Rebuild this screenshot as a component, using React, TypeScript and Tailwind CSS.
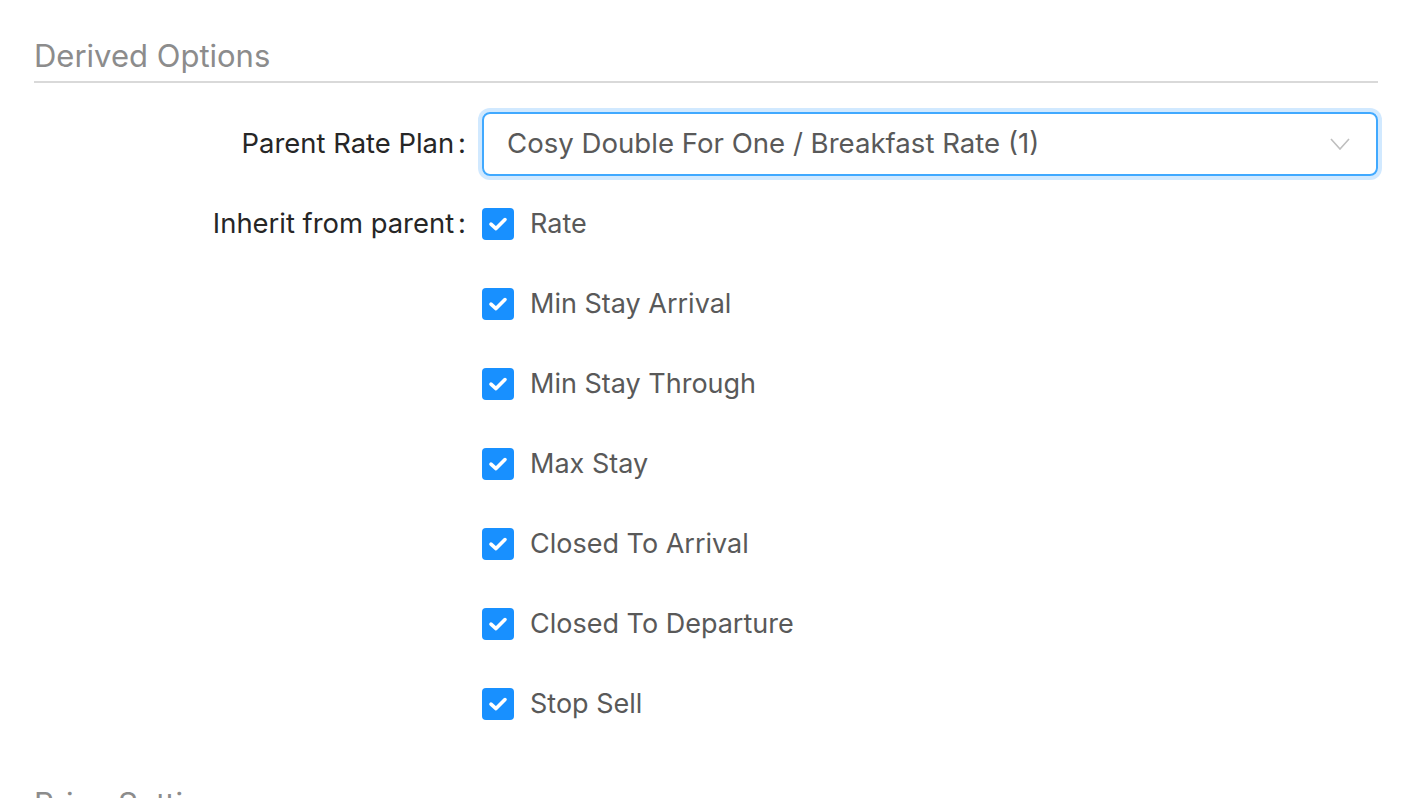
import React from 'react';

const options = [
  'Rate',
  'Min Stay Arrival',
  'Min Stay Through',
  'Max Stay',
  'Closed To Arrival',
  'Closed To Departure',
  'Stop Sell',
];

const CheckBox: React.FC = () => (
  <span className="flex h-[32px] w-[32px] shrink-0 items-center justify-center rounded-[4px] bg-[#1890ff]">
    <svg width="20" height="16" viewBox="0 0 20 16" fill="none">
      <path d="M3 8.2 L8 12.6 L17 3.6" stroke="white" strokeWidth="3.6" strokeLinecap="round" strokeLinejoin="round" />
    </svg>
  </span>
);

const FormLabel: React.FC<{ text: string }> = ({ text }) => (
  <div className="flex w-[448px] shrink-0 items-center justify-end text-[27.4px] text-[#262626]">
    <span>{text}</span>
    <span className="ml-[4px] mr-[16px]">:</span>
  </div>
);

const App: React.FC = () => {
  return (
    <div className="min-h-screen overflow-hidden bg-white pl-[34px] pr-[24px] pt-[33px] font-['Inter',sans-serif]">
      {/* Derived Options */}
      <h2 className="border-b-2 border-[#d9d9d9] pb-[2px] text-[31px] font-normal leading-[46px] text-[#8c8c8c]">
        Derived Options
      </h2>

      <div className="mt-[29px]">
        <div className="flex h-[64px] items-center">
          <FormLabel text="Parent Rate Plan" />
          <div className="flex h-[64px] flex-1 items-center justify-between rounded-[8px] border-2 border-[#40a9ff] pl-[23px] pr-[26px] shadow-[0_0_0_4px_rgba(24,144,255,0.2)]">
            <span className="text-[27.6px] text-[#595959]">Cosy Double For One / Breakfast Rate (1)</span>
            <svg width="20" height="12" viewBox="0 0 20 12" fill="none">
              <path d="M1 1 L10 11 L19 1" stroke="#bfbfbf" strokeWidth="1.6" />
            </svg>
          </div>
        </div>

        <div className="mt-[8px] flex">
          <div className="flex h-[80px] items-center">
            <FormLabel text="Inherit from parent" />
          </div>
          <div className="flex flex-col">
            {options.map((o) => (
              <label key={o} className="flex h-[80px] items-center gap-[16px]">
                <CheckBox />
                <span className="text-[27px] text-[#595959]">{o}</span>
              </label>
            ))}
          </div>
        </div>
      </div>

      {/* next section, cut off by the window */}
      <h2 className="mt-[37px] border-b-2 border-[#d9d9d9] pb-[2px] text-[31px] font-normal leading-[46px] text-[#8c8c8c]">
        Price Settings
      </h2>
    </div>
  );
};

export default App;
